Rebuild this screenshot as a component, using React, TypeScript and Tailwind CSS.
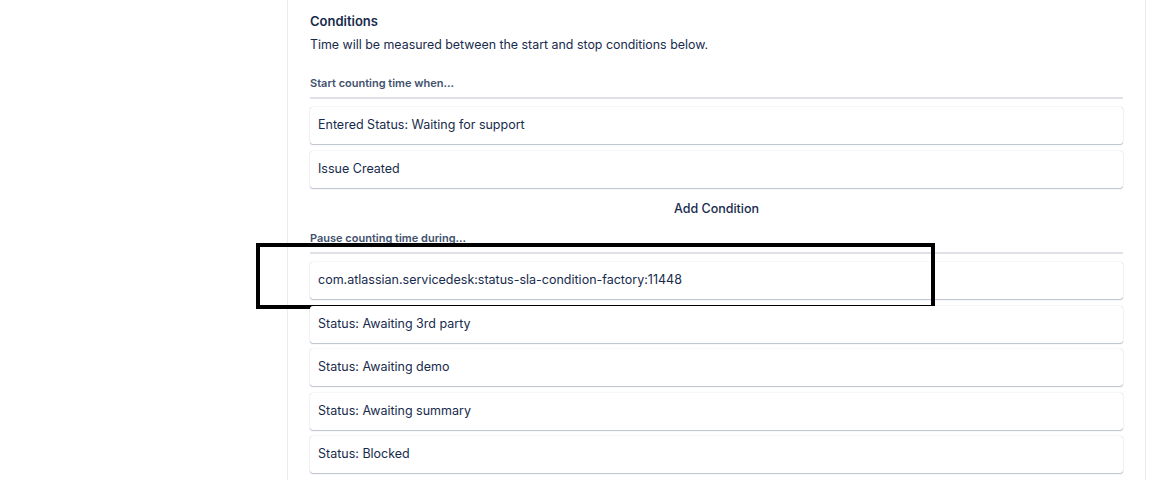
const startConditions = ["Entered Status: Waiting for support", "Issue Created"];

const pauseConditions = [
  "com.atlassian.servicedesk:status-sla-condition-factory:11448",
  "Status: Awaiting 3rd party",
  "Status: Awaiting demo",
  "Status: Awaiting summary",
  "Status: Blocked",
];

// One condition card: white, soft Atlassian-style shadow, small radius.
function ConditionRow({ label }: { label: string }) {
  return (
    <div className="flex h-[37px] items-center rounded-[3px] bg-white px-2 text-[12.5px] text-[#172b4d] shadow-[0_1px_1px_rgba(9,30,66,0.25),0_0_1px_rgba(9,30,66,0.31)]">
      {label}
    </div>
  );
}

function SectionHeading({ children }: { children: string }) {
  return (
    <div className="border-b-2 border-[#dfe1e6] pb-[6px] text-[11px] leading-4 font-semibold text-[#42526e]">
      {children}
    </div>
  );
}

export default function App() {
  return (
    <div className="h-[480px] w-[1150px] overflow-hidden bg-white font-['Inter',sans-serif]">
      <div className="ml-[287px] h-full w-[859px] border-x border-[#ebecf0] px-[22px] pt-[13px]">
        <h2 className="text-[13px] leading-4 font-semibold text-[#172b4d]">Conditions</h2>
        <p className="mt-2 text-[12.4px] leading-4 text-[#172b4d]">
          Time will be measured between the start and stop conditions below.
        </p>

        <div className="mt-[22px]">
          <SectionHeading>Start counting time when...</SectionHeading>
          <div className="mt-2 flex flex-col gap-[7px]">
            {startConditions.map((c) => (
              <ConditionRow key={c} label={c} />
            ))}
          </div>
        </div>

        <div className="mt-[13px] text-center text-[12.5px] leading-4 font-medium text-[#172b4d]">
          Add Condition
        </div>

        <div className="mt-[13px]">
          <SectionHeading>Pause counting time during...</SectionHeading>
          <div className="mt-2 flex flex-col gap-[6.5px]">
            {pauseConditions.map((c, i) => (
              <div key={c} className="relative">
                <ConditionRow label={c} />
                {i === 0 && (
                  <div className="pointer-events-none absolute top-[-19px] left-[-54px] h-[66px] w-[679px] border-4 border-black" />
                )}
              </div>
            ))}
          </div>
        </div>
      </div>
    </div>
  );
}
